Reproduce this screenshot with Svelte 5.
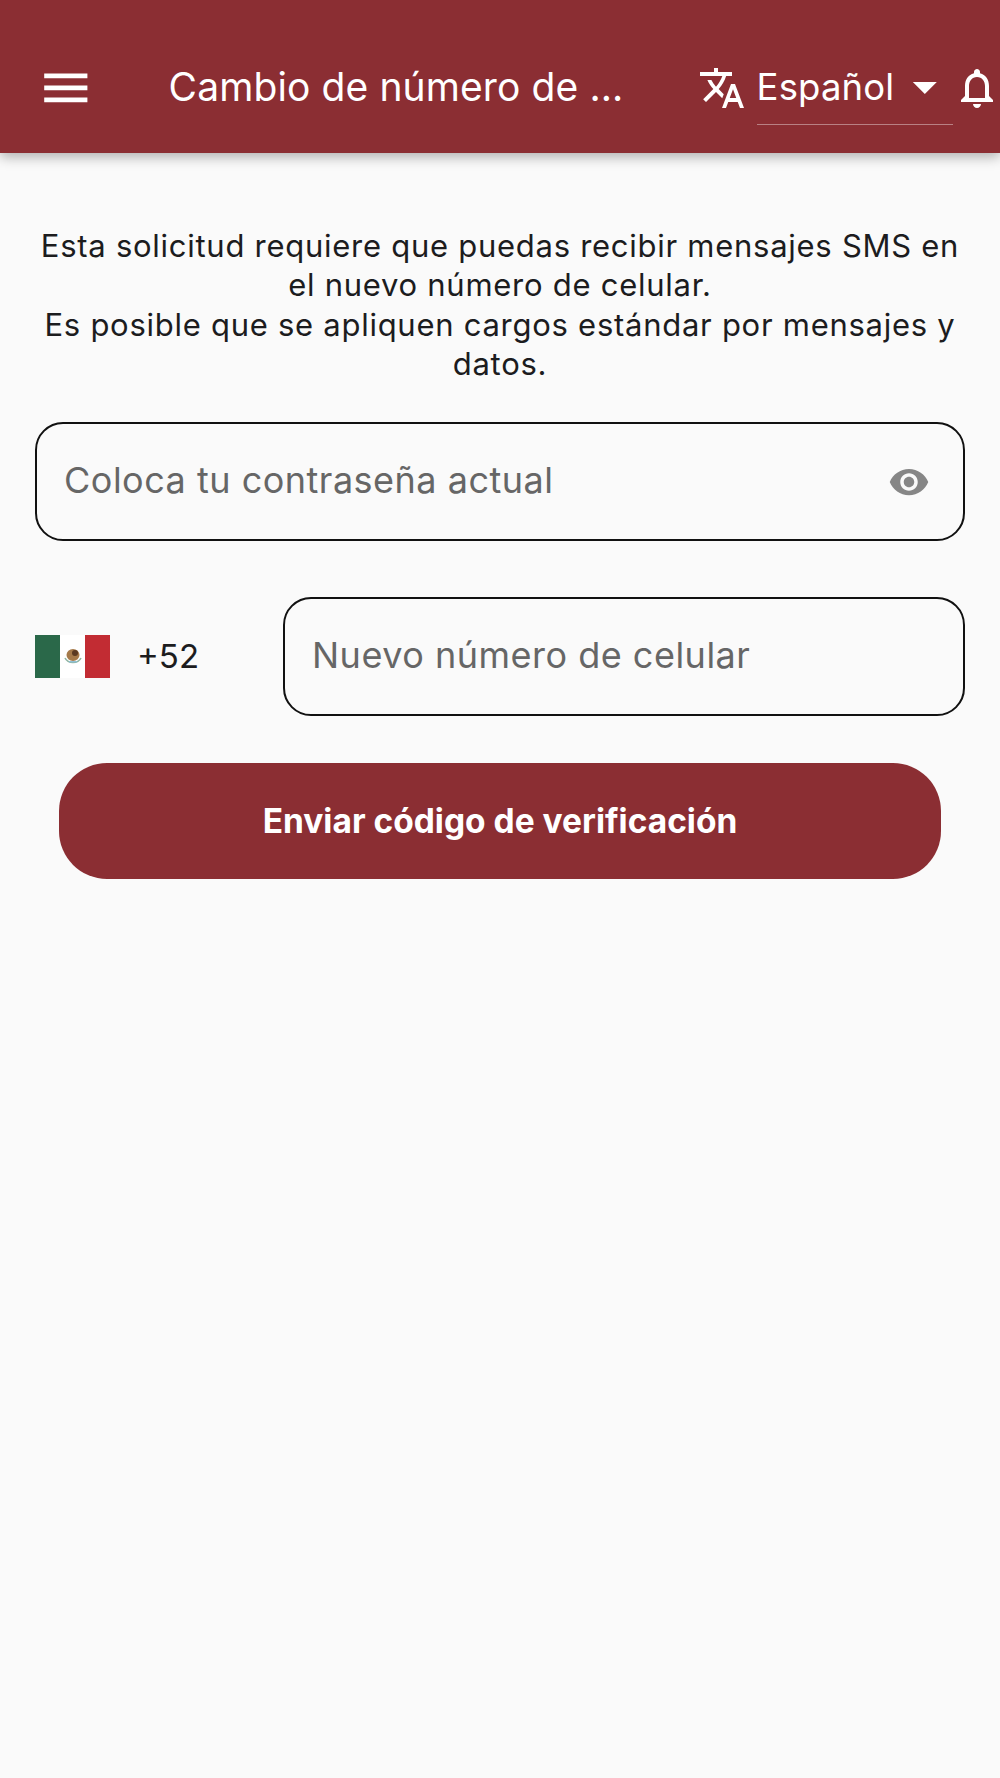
<script>
	const intro = [
		'Esta solicitud requiere que puedas recibir mensajes SMS en el nuevo número de celular.',
		'Es posible que se apliquen cargos estándar por mensajes y datos.'
	];
</script>

<header class="appbar">
	<button class="icon-btn menu" aria-label="Menú">
		<svg viewBox="0 0 24 24" width="57.6" height="57.6"><path d="M3 18h18v-2H3v2zm0-5h18v-2H3v2zm0-7v2h18V6H3z" /></svg>
	</button>
	<h1>Cambio de número de ...</h1>
	<svg class="translate" viewBox="0 0 24 24" width="48" height="48"><path d="M12.87 15.07l-2.54-2.51.03-.03c1.74-1.94 2.98-4.17 3.71-6.53H17V4h-7V2H8v2H1v1.99h11.17C11.5 7.92 10.44 9.75 9 11.35 8.07 10.32 7.3 9.19 6.69 8h-2c.73 1.63 1.73 3.17 2.98 4.56l-5.09 5.02L4 19l5-5 3.11 3.11.76-2.04zM18.5 10h-2L12 22h2l1.12-3h4.75L21 22h2l-4.5-12zm-2.62 7l1.62-4.33L19.12 17h-3.24z" /></svg>
	<div class="lang">
		<span>Español</span>
		<svg viewBox="0 0 24 24" width="57.6" height="57.6"><path d="M7 10l5 5 5-5z" /></svg>
	</div>
	<svg class="bell" viewBox="0 0 24 24" width="48" height="48"><path d="M12 22c1.1 0 2-.9 2-2h-4c0 1.1.9 2 2 2zm6-6v-5c0-3.07-1.63-5.64-4.5-6.32V4c0-.83-.67-1.5-1.5-1.5s-1.5.67-1.5 1.5v.68C7.64 5.36 6 7.92 6 11v5l-2 2v1h16v-1l-2-2zm-2 1H8v-6c0-2.48 1.51-4.5 4-4.5s4 2.02 4 4.5v6z" /></svg>
</header>

<main>
	<div class="intro">
		{#each intro as line}
			<p>{line}</p>
		{/each}
	</div>

	<label class="field">
		<input type="password" placeholder="Coloca tu contraseña actual" />
		<svg viewBox="0 0 24 24" width="42" height="42"><path d="M12 4.5C7 4.5 2.73 7.61 1 12c1.73 4.39 6 7.5 11 7.5s9.27-3.11 11-7.5c-1.73-4.39-6-7.5-11-7.5zM12 17c-2.76 0-5-2.24-5-5s2.24-5 5-5 5 2.24 5 5-2.24 5-5 5zm0-8c-1.66 0-3 1.34-3 3s1.34 3 3 3 3-1.34 3-3-1.34-3-3-3z" /></svg>
	</label>

	<div class="phone">
		<div class="country">
			<svg class="flag" viewBox="0 0 75 43" width="75" height="43">
				<rect width="25" height="43" fill="#2a6849" />
				<rect x="25" width="25" height="43" fill="#fff" />
				<rect x="50" width="25" height="43" fill="#c22c33" />
				<ellipse cx="38" cy="20" rx="6.5" ry="6" fill="#a57a4a" />
				<circle cx="40" cy="18" r="3" fill="#5a3a22" />
				<path d="M30 23c3 6 13 6 16 0" fill="none" stroke="#8fb5a2" stroke-width="1.6" />
				<rect x="34" y="26" width="8" height="1.4" fill="#8fc0d6" />
			</svg>
			<span>+52</span>
		</div>
		<label class="field grow">
			<input type="tel" placeholder="Nuevo número de celular" />
		</label>
	</div>

	<button class="submit">Enviar código de verificación</button>
</main>

<style>
	:global(body) {
		background: #fafafa;
		font-family: Inter, 'Noto Sans', sans-serif;
		min-height: 1778px;
	}

	.appbar {
		height: 153px;
		background: #8b2e33;
		color: #fff;
		display: flex;
		align-items: center;
		padding: 22px 0 0 37px;
		box-sizing: border-box;
		box-shadow: 0 4px 12px rgba(0, 0, 0, 0.3);
		overflow: hidden;
		white-space: nowrap;
	}

	.appbar svg {
		fill: #fff;
		flex: none;
	}

	.icon-btn {
		background: none;
		border: 0;
		padding: 0;
		display: flex;
	}

	h1 {
		margin: 0 0 2px 74px;
		width: 526px;
		font-size: 39px;
		font-weight: 400;
		letter-spacing: 0.1px;
		flex: none;
	}

	.translate {
		margin-left: 3px;
	}

	.lang {
		margin: 3px 0 0 11px;
		width: 196px;
		height: 72px;
		padding-bottom: 3px;
		flex: none;
		display: flex;
		align-items: center;
		justify-content: space-between;
		border-bottom: 1px solid rgba(255, 255, 255, 0.4);
		box-sizing: border-box;
		font-size: 36.5px;
		letter-spacing: 0.15px;
	}

	.lang svg {
		margin-right: -1px;
	}

	main {
		padding: 72.5px 35px 0;
	}

	.intro {
		text-align: center;
		font-size: 31px;
		line-height: 39.5px;
		color: #1c1c1e;
		letter-spacing: 0.73px;
	}

	.intro p {
		margin: 0;
	}

	.field {
		display: flex;
		align-items: center;
		height: 119px;
		margin-top: 38px;
		padding: 0 27px 3px;
		box-sizing: border-box;
		border: 2px solid #111;
		border-radius: 28px;
	}

	.field svg {
		fill: #868686;
		flex: none;
		margin: 5px 6px 0 0;
	}

	input {
		flex: 1;
		min-width: 0;
		border: 0;
		outline: 0;
		padding: 0;
		background: none;
		font: inherit;
		font-size: 36px;
		letter-spacing: 0.5px;
	}

	input::placeholder {
		color: #666;
		opacity: 1;
	}

	.phone {
		display: flex;
		align-items: center;
		margin-top: 56px;
	}

	.country {
		width: 248px;
		flex: none;
		display: flex;
		align-items: center;
		gap: 27px;
		font-size: 33px;
		color: #1c1c1e;
	}

	.grow {
		flex: 1;
		margin-top: 0;
	}

	.submit {
		display: block;
		width: 882px;
		height: 116px;
		margin: 47px auto 0;
		border: 0;
		border-radius: 48px;
		background: #8b2e33;
		color: #fff;
		font: inherit;
		font-size: 33.5px;
		font-weight: 700;
	}
</style>
